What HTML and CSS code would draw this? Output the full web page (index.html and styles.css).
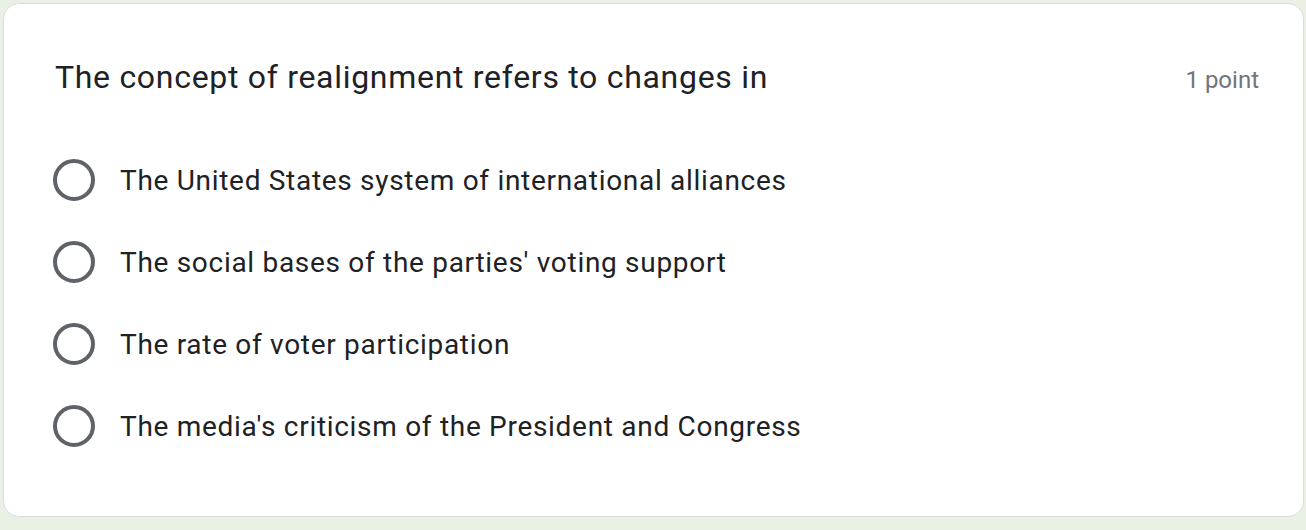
FILE: index.html
```html
<!DOCTYPE html>
<html>
<head>
<meta charset="utf-8">
<link rel="stylesheet" href="styles.css">
</head>
<body>
<div class="card">
  <div class="head">
    <div class="title">The concept of realignment refers to changes in</div>
    <div class="points">1 point</div>
  </div>
  <div class="options">
    <div class="option"><span class="radio"></span><span class="label">The United States system of international alliances</span></div>
    <div class="option"><span class="radio"></span><span class="label">The social bases of the parties' voting support</span></div>
    <div class="option"><span class="radio"></span><span class="label">The rate of voter participation</span></div>
    <div class="option"><span class="radio"></span><span class="label">The media's criticism of the President and Congress</span></div>
  </div>
</div>
</body>
</html>
```
FILE: styles.css
```css
html, body {
  margin: 0;
  padding: 0;
}
body {
  background: #e9f1e5;
  width: 1306px;
  height: 530px;
  overflow: hidden;
  font-family: Roboto, "Liberation Sans", Arial, sans-serif;
}
.card {
  box-sizing: border-box;
  margin: 3px 2px 0 3px;
  width: 1301px;
  height: 514px;
  background: #fff;
  border: 1px solid #dadce0;
  border-radius: 16px;
  padding: 49px 44px 0 51px;
}
.head {
  display: flex;
  justify-content: space-between;
  align-items: baseline;
}
.title {
  font-size: 32px;
  line-height: 48px;
  color: #202124;
  letter-spacing: 0.7px;
}
.points {
  font-size: 24px;
  color: #70757a;
}
.options {
  margin-top: 38px;
  display: flex;
  flex-direction: column;
}
.option {
  height: 82px;
  display: flex;
  align-items: center;
}
.radio {
  box-sizing: border-box;
  width: 42px;
  height: 42px;
  border: 4px solid #5f6368;
  border-radius: 50%;
  margin-left: -2px;
  flex: none;
}
.label {
  margin-left: 25px;
  font-size: 28px;
  color: #202124;
  letter-spacing: 0.7px;
}
```
